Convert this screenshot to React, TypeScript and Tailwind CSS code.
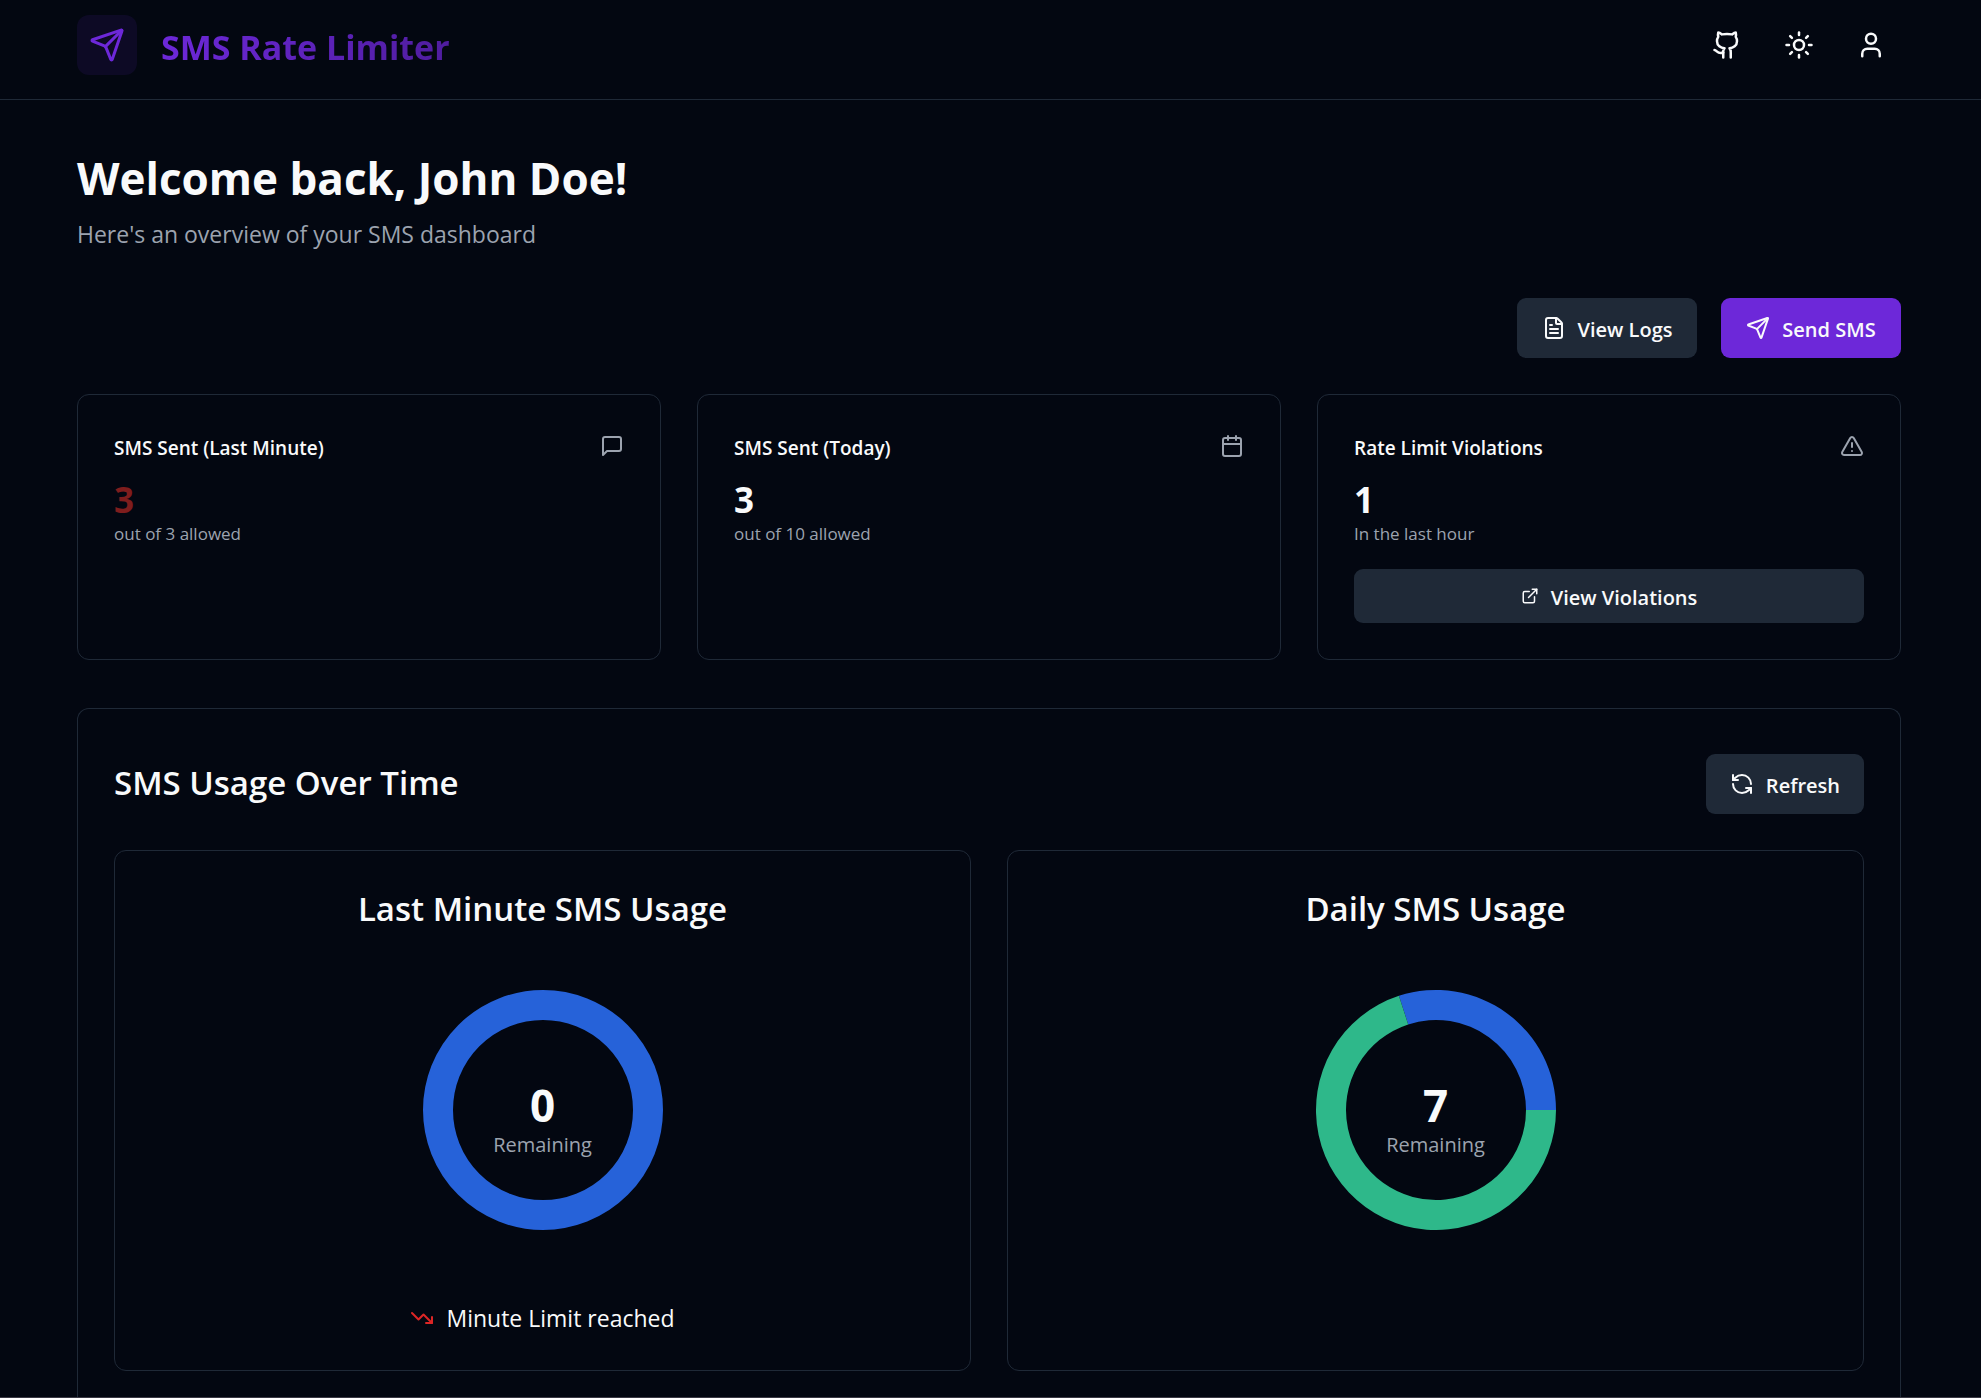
import React from "react";
import {
  Calendar,
  ExternalLink,
  FileText,
  Github,
  RefreshCcw,
  Send,
  Sun,
  TrendingDown,
  TriangleAlert,
  User,
} from "lucide-react";

const BLUE = "#2662d9";
const GREEN = "#2eb88a";

function MessageIcon({ className }: { className?: string }) {
  return (
    <svg
      viewBox="0 0 24 24"
      fill="none"
      stroke="currentColor"
      strokeWidth="2"
      strokeLinecap="round"
      strokeLinejoin="round"
      className={className}
      aria-hidden="true"
    >
      <path d="M21 15a2 2 0 0 1-2 2H7l-4 4V5a2 2 0 0 1 2-2h14a2 2 0 0 1 2 2z" />
    </svg>
  );
}

function IconButton({ label, children }: { label: string; children: React.ReactNode }) {
  return (
    <button type="button" aria-label={label} className="flex size-15 items-center justify-center rounded-lg">
      {children}
    </button>
  );
}

function Header() {
  return (
    <header className="border-b border-[#1f2937] pr-[3px]">
      <div className="mx-auto flex max-w-[1920px] items-center justify-between px-12 pt-[15px] pb-6">
        <a href="#" className="flex items-center gap-6">
          <span className="flex size-15 items-center justify-center rounded-xl bg-[#6d28d9]/10 text-[#6d28d9]">
            <Send className="size-9" />
          </span>
          <span className="bg-linear-to-r from-[#6d28d9] to-[#4f1d9f] bg-clip-text pt-1 text-[34px] leading-10 font-bold text-transparent">
            SMS Rate Limiter
          </span>
        </a>
        <nav className="flex items-center gap-3">
          <IconButton label="GitHub">
            <Github className="size-[30px]" />
          </IconButton>
          <IconButton label="Toggle theme">
            <Sun className="size-[30px]" />
          </IconButton>
          <IconButton label="Account">
            <User className="size-[30px]" />
          </IconButton>
        </nav>
      </div>
    </header>
  );
}

type StatProps = {
  title: string;
  value: number;
  note: string;
  icon: React.ReactNode;
  danger?: boolean;
  children?: React.ReactNode;
};

function StatCard({ title, value, note, icon, danger, children }: StatProps) {
  return (
    <section className="rounded-xl border border-[#1f2937] p-9">
      <div className="flex items-center justify-between">
        <h3 className="pt-1 text-[19px] leading-[26px] font-semibold">{title}</h3>
        <span className="text-[#9ca3af]">{icon}</span>
      </div>
      <p
        className={
          danger ? "mt-4 text-[35px] leading-[46px] font-bold text-[#7f1d1d]" : "mt-4 text-[35px] leading-[46px] font-bold"
        }
      >
        {value}
      </p>
      <p className="text-[17px] leading-[22px] text-[#9ca3af]">{note}</p>
      {children}
    </section>
  );
}

// Point on a circle centred at the origin; angles run counter-clockwise from 3 o'clock.
function point(radius: number, angle: number) {
  const rad = (angle * Math.PI) / 180;
  return `${radius * Math.cos(rad)} ${-radius * Math.sin(rad)}`;
}

function slice(start: number, end: number) {
  const large = end - start > 180 ? 1 : 0;
  return `M${point(120, start)}A120 120 0 ${large} 0 ${point(120, end)}L${point(90, end)}A90 90 0 ${large} 1 ${point(90, start)}Z`;
}

function Donut({ used, remaining }: { used: number; remaining: number }) {
  const split = (360 * used) / (used + remaining);
  return (
    <div className="mt-[55px] grid place-items-center">
      <svg viewBox="-120 -120 240 240" className="col-start-1 row-start-1 size-60" aria-hidden="true">
        {remaining === 0 ? (
          <circle r="105" fill="none" stroke={BLUE} strokeWidth="30" />
        ) : (
          <>
            <path d={slice(0, split)} fill={BLUE} />
            <path d={slice(split, 360)} fill={GREEN} />
          </>
        )}
      </svg>
      <div className="col-start-1 row-start-1 pt-[18px] text-center">
        <p className="text-[44px] leading-13 font-bold">{remaining}</p>
        <p className="text-[20px] leading-7 text-[#9ca3af]">Remaining</p>
      </div>
    </div>
  );
}

function UsageCard({ title, used, remaining, message }: { title: string; used: number; remaining: number; message?: string }) {
  return (
    <section className="flex min-h-[521px] flex-col rounded-xl border border-[#1f2937] px-9 pt-8 pb-9 text-center">
      <h3 className="text-[33px] leading-13 font-semibold">{title}</h3>
      <Donut used={used} remaining={remaining} />
      {message && (
        <p className="mt-auto flex items-center justify-center gap-3 text-[23px] leading-8">
          <TrendingDown className="size-6 text-[#dc2626]" />
          {message}
        </p>
      )}
    </section>
  );
}

export default function App() {
  return (
    <div className="min-h-screen border-b border-[#3b3a45] bg-[#030711] font-['Open_Sans',sans-serif] text-[#f9fafb]">
      <Header />
      <div className="pr-[3px]">
        <main className="mx-auto max-w-[1920px] px-12 pt-12">
          <h1 className="text-[44px] leading-15 font-bold">Welcome back, John Doe!</h1>
          <p className="mt-2 text-[23px] leading-9 text-[#9ca3af]">Here's an overview of your SMS dashboard</p>

          <div className="mt-[46px] flex justify-end gap-6">
            <button
              type="button"
              className="flex h-15 min-w-[180px] items-center justify-center gap-3 rounded-[9px] bg-[#1f2937] px-6 text-[20px] font-semibold"
            >
              <FileText className="size-6" />
              <span className="pt-1">View Logs</span>
            </button>
            <button
              type="button"
              className="flex h-15 min-w-[180px] items-center justify-center gap-3 rounded-[9px] bg-[#6d28d9] px-6 text-[20px] font-semibold"
            >
              <Send className="size-6" />
              <span className="pt-1">Send SMS</span>
            </button>
          </div>

          <div className="mt-9 grid grid-cols-3 gap-9">
            <StatCard
              title="SMS Sent (Last Minute)"
              value={3}
              note="out of 3 allowed"
              danger
              icon={<MessageIcon className="size-6" />}
            />
            <StatCard title="SMS Sent (Today)" value={3} note="out of 10 allowed" icon={<Calendar className="size-6" />} />
            <StatCard title="Rate Limit Violations" value={1} note="In the last hour" icon={<TriangleAlert className="size-6" />}>
              <button
                type="button"
                className="mt-6 flex h-[54px] w-full items-center justify-center gap-3 rounded-[9px] bg-[#1f2937] text-[20px] font-semibold"
              >
                <ExternalLink className="size-[18px]" />
                <span className="pt-1">View Violations</span>
              </button>
            </StatCard>
          </div>

          <section className="mt-12 rounded-t-xl border border-b-0 border-[#1f2937] px-9 pt-[45px] pb-[26px]">
            <div className="flex items-center justify-between">
              <h2 className="pb-0.5 text-[33px] leading-12 font-semibold">SMS Usage Over Time</h2>
              <button
                type="button"
                className="flex h-15 items-center justify-center gap-3 rounded-[9px] bg-[#1f2937] px-6 text-[20px] font-semibold"
              >
                <RefreshCcw className="size-6" />
                <span className="pt-1">Refresh</span>
              </button>
            </div>
            <div className="mt-9 grid grid-cols-2 gap-9">
              <UsageCard title="Last Minute SMS Usage" used={3} remaining={0} message="Minute Limit reached" />
              <UsageCard title="Daily SMS Usage" used={3} remaining={7} />
            </div>
          </section>
        </main>
      </div>
    </div>
  );
}
